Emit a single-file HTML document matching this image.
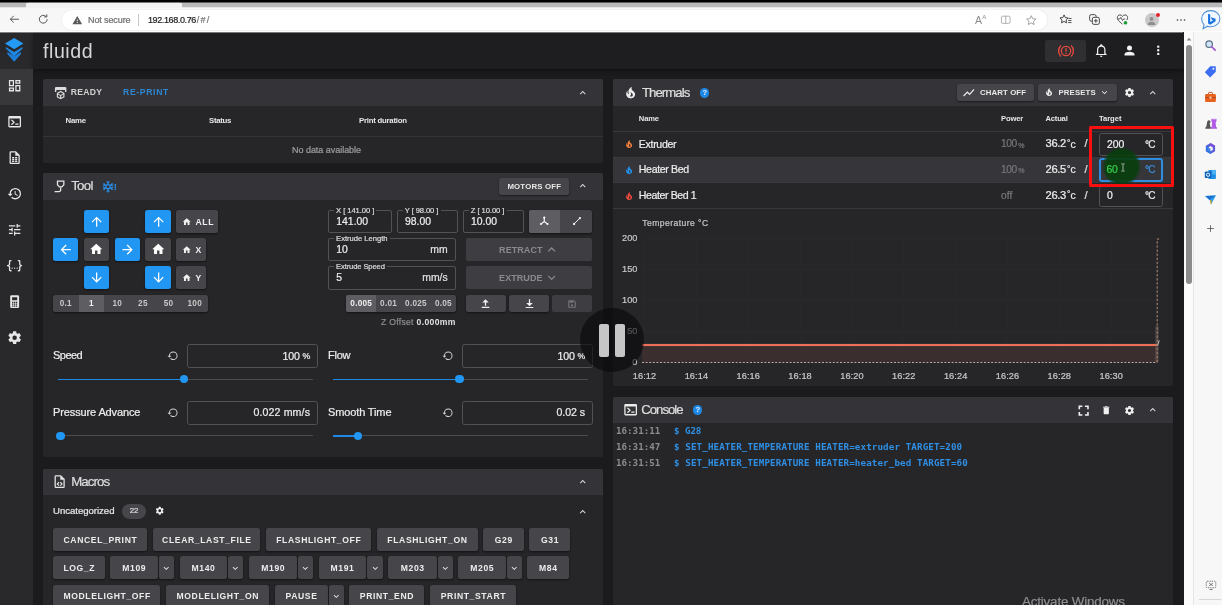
<!DOCTYPE html>
<html lang="en"><head><meta charset="utf-8"><title>fluidd</title>
<style>
html,body{margin:0;padding:0;background:#1b1b1e;}
body{width:1222px;height:605px;position:relative;overflow:hidden;font-family:"Liberation Sans",sans-serif;}
#root{position:absolute;left:0;top:0;width:1222px;height:605px;overflow:hidden;will-change:transform;}
#root div,#root span,#root svg{position:absolute;box-sizing:content-box;}
.t{white-space:nowrap;line-height:1;font-weight:400;-webkit-text-stroke:.22px currentColor;}
.b{font-weight:700;-webkit-text-stroke:0;}
.m{font-family:"DejaVu Sans Mono","Liberation Mono",monospace;}
</style></head><body><div id="root">

<!-- app background -->
<div style="left:0px;top:32px;width:1183.5px;height:573px;background:#1b1b1e;"></div>
<div style="left:0px;top:32px;width:33px;height:573px;background:#29292c;"></div>
<div style="left:33px;top:32px;width:1150.5px;height:36.5px;background:#1e1e21;box-shadow:0 2px 4px rgba(0,0,0,.35);"></div>
<div style="left:0px;top:68.5px;width:33px;height:36px;background:#38383b;"></div>
<!-- left navigation -->
<svg style="left:6.75px;top:78.35px;" width="15.3" height="15.3" viewBox="0 0 24 24" fill="#e6e6e6"><path d="M19,5V7H15V5H19M9,5V11H5V5H9M19,13V19H15V13H19M9,17V19H5V17H9M21,3H13V9H21V3M11,3H3V13H11V3M21,11H13V21H21V11M11,15H3V21H11V15Z"/></svg>
<svg style="left:6.75px;top:114.35px;" width="15.3" height="15.3" viewBox="0 0 24 24" fill="#e6e6e6"><path d="M20,19V7H4V19H20M20,3A2,2 0 0,1 22,5V19A2,2 0 0,1 20,21H4A2,2 0 0,1 2,19V5C2,3.89 2.9,3 4,3H20M13,17V15H18V17H13M9.58,13L5.57,9H8.4L11.7,12.3C12.09,12.69 12.09,13.33 11.7,13.72L8.42,17H5.59L9.58,13Z"/></svg>
<svg style="left:6.75px;top:150.35px;" width="15.3" height="15.3" viewBox="0 0 24 24" fill="#e6e6e6"><path d="M14,2H6A2,2 0 0,0 4,4V20A2,2 0 0,0 6,22H18A2,2 0 0,0 20,20V8L14,2M18,20H6V4H13V9H18V20M8,11H11.300V13.300H8V11M12.700,11H16V13.300H12.700V11M8,14.300H11.300V16.300H8V14.300M12.700,14.300H16V16.300H12.700V14.300M8,17.300H11.300V19H8V17.300M12.700,17.300H16V19H12.700V17.300Z"/></svg>
<svg style="left:6.75px;top:186.35px;" width="15.3" height="15.3" viewBox="0 0 24 24" fill="#e6e6e6"><path d="M13.5,8H12V13L16.28,15.54L17,14.33L13.5,12.25V8M13,3A9,9 0 0,0 4,12H1L4.96,16.03L9,12H6A7,7 0 0,1 13,5A7,7 0 0,1 20,12A7,7 0 0,1 13,19C11.07,19 9.32,18.21 8.06,16.94L6.64,18.36C8.27,20 10.5,21 13,21A9,9 0 0,0 22,12A9,9 0 0,0 13,3"/></svg>
<svg style="left:6.75px;top:222.35px;" width="15.3" height="15.3" viewBox="0 0 24 24" fill="#e6e6e6"><path d="M3,17V19H9V17H3M3,5V7H13V5H3M13,21V19H21V17H13V15H11V21H13M7,9V11H3V13H7V15H9V9H7M21,13V11H11V13H21M15,9H17V7H21V5H17V3H15V9Z"/></svg>
<svg style="left:6.75px;top:258.35px;" width="15.3" height="15.3" viewBox="0 0 24 24" fill="#e6e6e6"><path d="M5,3H7V5H5V10A2,2 0 0,1 3,12A2,2 0 0,1 5,14V19H7V21H5C3.93,20.73 3,20.1 3,19V15A2,2 0 0,0 1,13H0V11H1A2,2 0 0,0 3,9V5A2,2 0 0,1 5,3M19,3A2,2 0 0,1 21,5V9A2,2 0 0,0 23,11H24V13H23A2,2 0 0,0 21,15V19A2,2 0 0,1 19,21H17V19H19V14A2,2 0 0,1 21,12A2,2 0 0,1 19,10V5H17V3H19M12,15A1,1 0 0,1 13,16A1,1 0 0,1 12,17A1,1 0 0,1 11,16A1,1 0 0,1 12,15M8,15A1,1 0 0,1 9,16A1,1 0 0,1 8,17A1,1 0 0,1 7,16A1,1 0 0,1 8,15M16,15A1,1 0 0,1 17,16A1,1 0 0,1 16,17A1,1 0 0,1 15,16A1,1 0 0,1 16,15Z"/></svg>
<svg style="left:6.75px;top:294.35px;" width="15.3" height="15.3" viewBox="0 0 24 24" fill="#e6e6e6"><path d="M7,2H17A2,2 0 0,1 19,4V20A2,2 0 0,1 17,22H7A2,2 0 0,1 5,20V4A2,2 0 0,1 7,2M8,5V10H16V5H8M8,12V14H10V12H8M11,12V14H13V12H11M14,12V14H16V12H14M8,15V17H10V15H8M11,15V17H13V15H11M14,15V17H16V15H14M8,18V20H10V18H8M11,18V20H13V18H11M14,18V20H16V18H14Z"/></svg>
<svg style="left:6.75px;top:330.35px;" width="15.3" height="15.3" viewBox="0 0 24 24" fill="#e6e6e6"><path d="M12,15.5A3.5,3.5 0 0,1 8.5,12A3.5,3.5 0 0,1 12,8.5A3.5,3.5 0 0,1 15.5,12A3.5,3.5 0 0,1 12,15.5M19.43,12.97C19.47,12.65 19.5,12.33 19.5,12C19.5,11.67 19.47,11.34 19.43,11L21.54,9.37C21.73,9.22 21.78,8.95 21.66,8.73L19.66,5.27C19.54,5.05 19.27,4.96 19.05,5.05L16.56,6.05C16.04,5.66 15.5,5.32 14.87,5.07L14.5,2.42C14.46,2.18 14.25,2 14,2H10C9.75,2 9.54,2.18 9.5,2.42L9.13,5.07C8.5,5.32 7.96,5.66 7.44,6.05L4.95,5.05C4.73,4.96 4.46,5.05 4.34,5.27L2.34,8.73C2.21,8.95 2.27,9.22 2.46,9.37L4.57,11C4.53,11.34 4.5,11.67 4.5,12C4.5,12.33 4.53,12.65 4.57,12.97L2.46,14.63C2.27,14.78 2.21,15.05 2.34,15.27L4.34,18.73C4.46,18.95 4.73,19.03 4.95,18.95L7.44,17.94C7.96,18.34 8.5,18.68 9.13,18.93L9.5,21.58C9.54,21.82 9.75,22 10,22H14C14.25,22 14.46,21.82 14.5,21.58L14.87,18.93C15.5,18.67 16.04,18.34 16.56,17.94L19.05,18.95C19.27,19.03 19.54,18.95 19.66,18.73L21.66,15.27C21.78,15.05 21.73,14.78 21.54,14.63L19.43,12.97Z"/></svg>
<svg style="left:4.3px;top:38.3px;" width="20.4" height="24" viewBox="0 0 24 30" fill="#e0e0e0"><path d="M3.500 17.600L12 22.800l8.500-5.200v2.400L12 29.600 3.500 20z" fill="#1c7fdc"/><path d="M1.500 11.200L12 17.400l10.500-6.200v2L12 23.200 1.500 13.200z" fill="#1e88e5"/><path d="M12 0l11.500 7L12 14 .5 7z" fill="#2499f5"/></svg>
<span class="t" style="left:43px;top:42.43px;font-size:19.6px;color:#d6d6d6;letter-spacing:0.55px;-webkit-text-stroke:0;">fluidd</span>
<div style="left:1045px;top:39.5px;width:41px;height:22.5px;background:#2f2f32;border-radius:2px;"></div>
<svg style="left:1056.5px;top:41.6px;" width="18" height="18" viewBox="0 0 24 24" fill="#e0e0e0"><circle cx="12" cy="12" r="6.2" fill="none" stroke="#e5493c" stroke-width="1.8"/><path d="M12 8.3v4.6M12 14.4v1.6" stroke="#e5493c" stroke-width="1.8" fill="none"/><path d="M5.2 4.8A10 10 0 0 0 5.2 19.2M18.8 4.8a10 10 0 0 1 0 14.4" stroke="#e5493c" stroke-width="1.8" fill="none"/></svg>
<svg style="left:1094.25px;top:43.35px;" width="14.5" height="14.5" viewBox="0 0 24 24" fill="#f2f2f2"><path d="M10,21H14A2,2 0 0,1 12,23A2,2 0 0,1 10,21M21,19V20H3V19L5,17V11C5,7.9 7.03,5.17 10,4.29C10,4.19 10,4.1 10,4A2,2 0 0,1 12,2A2,2 0 0,1 14,4C14,4.1 14,4.19 14,4.29C16.97,5.17 19,7.9 19,11V17L21,19M17,11A5,5 0 0,0 12,6A5,5 0 0,0 7,11V18H17V11Z"/></svg>
<svg style="left:1122.2px;top:42.8px;" width="15" height="15" viewBox="0 0 24 24" fill="#f2f2f2"><path d="M12,4A4,4 0 0,1 16,8A4,4 0 0,1 12,12A4,4 0 0,1 8,8A4,4 0 0,1 12,4M12,14C16.42,14 20,15.79 20,18V20H4V18C4,15.79 7.58,14 12,14Z"/></svg>
<svg style="left:1150.75px;top:43.35px;" width="14.5" height="14.5" viewBox="0 0 24 24" fill="#f2f2f2"><path d="M12,16A2,2 0 0,1 14,18A2,2 0 0,1 12,20A2,2 0 0,1 10,18A2,2 0 0,1 12,16M12,10A2,2 0 0,1 14,12A2,2 0 0,1 12,14A2,2 0 0,1 10,12A2,2 0 0,1 12,10M12,4A2,2 0 0,1 14,6A2,2 0 0,1 12,8A2,2 0 0,1 10,6A2,2 0 0,1 12,4Z"/></svg>
<!-- status card -->
<div style="left:43.3px;top:105px;width:559.4px;height:57.5px;background:#262629;border-radius:2px;"></div>
<div style="left:43.3px;top:79px;width:559.4px;height:27px;background:#343438;border-radius:2px 2px 0 0;"></div>
<svg style="left:52.85px;top:84.85px;" width="15.3" height="15.3" viewBox="0 0 24 24" fill="#dcdcdc"><path d="M5 3h14a2 2 0 0 1 2 2v6h-2.2V8H5.2v3H3V5a2 2 0 0 1 2-2z"/><path d="M12 9.2l6 3.3v6.6l-6 3.4-6-3.4v-6.6z M12 11.3l-3.9 2.2 3.9 2.2 3.9-2.2z M7.8 15.1v3l3.3 1.9v-3z M16.2 15.1l-3.3 1.9v3l3.3-1.9z" fill-rule="evenodd"/></svg>
<span class="t b" style="left:70.8px;top:88.1px;font-size:8.6px;color:#d2d2d2;letter-spacing:0.27px;">READY</span>
<span class="t b" style="left:123px;top:88.1px;font-size:8.6px;color:#2b86d3;letter-spacing:0.67px;">RE-PRINT</span>
<svg style="left:576.75px;top:86.75px;" width="11.5" height="11.5" viewBox="0 0 24 24" fill="#d8d8d8"><path d="M7.41,15.41L12,10.83L16.59,15.41L18,14L12,8L6,14L7.41,15.41Z"/></svg>
<span class="t b" style="left:65.6px;top:117.19px;font-size:7.8px;color:#e6e6e6;letter-spacing:-0.28px;">Name</span>
<span class="t b" style="left:209px;top:117.19px;font-size:7.8px;color:#e6e6e6;letter-spacing:-0.31px;">Status</span>
<span class="t b" style="left:359px;top:117.19px;font-size:7.8px;color:#e6e6e6;letter-spacing:-0.24px;">Print duration</span>
<div style="left:43.3px;top:136px;width:559.4px;height:1px;background:#343438;"></div>
<span class="t" style="left:292px;top:145.6px;font-size:9px;color:#9c9c9c;letter-spacing:-0.03px;">No data available</span>
<!-- tool card -->
<div style="left:43.3px;top:198.5px;width:559.4px;height:258.5px;background:#262629;border-radius:2px;"></div>
<div style="left:43.3px;top:173px;width:559.4px;height:26.5px;background:#343438;border-radius:2px 2px 0 0;"></div>
<svg style="left:52.75px;top:178.85px;" width="15.3" height="15.3" viewBox="0 0 24 24" fill="#e4e4e4"><path d="M6 2.500h12v7l-3.600 4h-4.800L6 9.500z M8 4.500v4.200l2.500 2.800h3l2.500-2.800V4.500z" fill-rule="evenodd"/><path d="M11 13.500h2v3.800c0 2-1.400 3.400-3.600 3.400H2.500v-2h6.900c1 0 1.600-.5 1.600-1.500z"/></svg>
<span class="t" style="left:71.2px;top:178.85px;font-size:13.2px;color:#dedede;letter-spacing:-0.67px;">Tool</span>
<svg style="left:101.65px;top:178.75px;" width="15.3" height="15.3" viewBox="0 0 24 24" fill="#e0e0e0"><g stroke="#2a8ee8" fill="none"><path d="M9.500 3v18M1.700 7.500l15.600 9M17.300 7.500l-15.600 9" stroke-width="2"/><path d="M7 4.200l2.500 2.300L12 4.200M7 19.800l2.500-2.300 2.500 2.300M1.500 11l3.300-.8-1-3.200M17.500 11l-3.300-.8 1-3.200M1.500 13l3.300.8-1 3.200M17.500 13l-3.300.8 1 3.200" stroke-width="1.500"/><circle cx="9.500" cy="12" r="3.200" fill="#343438" stroke-width="1.800"/></g></svg>
<span class="t b" style="left:113.7px;top:182.01px;font-size:9.4px;color:#2a8ee8;">!</span>
<div style="left:499px;top:177.6px;width:70.2px;height:17.8px;background:#46464a;border-radius:2.5px;box-shadow:0 1px 2px rgba(0,0,0,.5);"></div>
<span class="t b" style="left:507.4px;top:182.69px;font-size:7.8px;color:#e8e8e8;letter-spacing:0.19px;">MOTORS OFF</span>
<svg style="left:576.75px;top:180.25px;" width="11.5" height="11.5" viewBox="0 0 24 24" fill="#d8d8d8"><path d="M7.41,15.41L12,10.83L16.59,15.41L18,14L12,8L6,14L7.41,15.41Z"/></svg>
<div style="left:83.8px;top:210px;width:25.6px;height:23px;background:#2196f3;border-radius:2.5px;box-shadow:0 1px 2px rgba(0,0,0,.5);"></div>
<svg style="left:88.95px;top:213.85px;" width="15.3" height="15.3" viewBox="0 0 24 24" fill="#fff"><path d="M13,20H11V8L5.5,13.5L4.08,12.08L12,4.16L19.92,12.08L18.5,13.5L13,8V20Z"/></svg>
<div style="left:145.4px;top:210px;width:25.6px;height:23px;background:#2196f3;border-radius:2.5px;box-shadow:0 1px 2px rgba(0,0,0,.5);"></div>
<svg style="left:150.55px;top:213.85px;" width="15.3" height="15.3" viewBox="0 0 24 24" fill="#fff"><path d="M13,20H11V8L5.5,13.5L4.08,12.08L12,4.16L19.92,12.08L18.5,13.5L13,8V20Z"/></svg>
<div style="left:52.8px;top:238.2px;width:25.6px;height:23px;background:#2196f3;border-radius:2.5px;box-shadow:0 1px 2px rgba(0,0,0,.5);"></div>
<svg style="left:57.95px;top:242.05px;" width="15.3" height="15.3" viewBox="0 0 24 24" fill="#fff"><path d="M20,11V13H8L13.5,18.5L12.08,19.92L4.16,12L12.08,4.08L13.5,5.5L8,11H20Z"/></svg>
<div style="left:83.8px;top:238.2px;width:25.6px;height:23px;background:#46464a;border-radius:2.5px;box-shadow:0 1px 2px rgba(0,0,0,.5);"></div>
<svg style="left:89.35px;top:242.45px;" width="14.5" height="14.5" viewBox="0 0 24 24" fill="#fff"><path d="M10,20V14H14V20H19V12H22L12,3L2,12H5V20H10Z"/></svg>
<div style="left:114.6px;top:238.2px;width:25.6px;height:23px;background:#2196f3;border-radius:2.5px;box-shadow:0 1px 2px rgba(0,0,0,.5);"></div>
<svg style="left:119.75px;top:242.05px;" width="15.3" height="15.3" viewBox="0 0 24 24" fill="#fff"><path d="M4,11V13H16L10.5,18.5L11.92,19.92L19.84,12L11.92,4.08L10.5,5.5L16,11H4Z"/></svg>
<div style="left:145.4px;top:238.2px;width:25.6px;height:23px;background:#46464a;border-radius:2.5px;box-shadow:0 1px 2px rgba(0,0,0,.5);"></div>
<svg style="left:150.95px;top:242.45px;" width="14.5" height="14.5" viewBox="0 0 24 24" fill="#fff"><path d="M10,20V14H14V20H19V12H22L12,3L2,12H5V20H10Z"/></svg>
<div style="left:83.8px;top:266.3px;width:25.6px;height:23px;background:#2196f3;border-radius:2.5px;box-shadow:0 1px 2px rgba(0,0,0,.5);"></div>
<svg style="left:88.95px;top:270.15px;" width="15.3" height="15.3" viewBox="0 0 24 24" fill="#fff"><path d="M11,4H13V16L18.5,10.5L19.92,11.92L12,19.84L4.08,11.92L5.5,10.5L11,16V4Z"/></svg>
<div style="left:145.4px;top:266.3px;width:25.6px;height:23px;background:#2196f3;border-radius:2.5px;box-shadow:0 1px 2px rgba(0,0,0,.5);"></div>
<svg style="left:150.55px;top:270.15px;" width="15.3" height="15.3" viewBox="0 0 24 24" fill="#fff"><path d="M11,4H13V16L18.5,10.5L19.92,11.92L12,19.84L4.08,11.92L5.5,10.5L11,16V4Z"/></svg>
<div style="left:176.4px;top:210px;width:41.3px;height:23px;background:#46464a;border-radius:2.5px;box-shadow:0 1px 2px rgba(0,0,0,.5);"></div>
<svg style="left:181.55px;top:216.55px;" width="9.5" height="9.5" viewBox="0 0 24 24" fill="#f0f0f0"><path d="M10,20V14H14V20H19V12H22L12,3L2,12H5V20H10Z"/></svg>
<span class="t b" style="left:195.4px;top:217.5px;font-size:8.6px;color:#f0f0f0;letter-spacing:0.7px;">ALL</span>
<div style="left:176.4px;top:238.2px;width:30px;height:23px;background:#46464a;border-radius:2.5px;box-shadow:0 1px 2px rgba(0,0,0,.5);"></div>
<svg style="left:181.55px;top:244.75px;" width="9.5" height="9.5" viewBox="0 0 24 24" fill="#f0f0f0"><path d="M10,20V14H14V20H19V12H22L12,3L2,12H5V20H10Z"/></svg>
<span class="t b" style="left:195.4px;top:245.7px;font-size:8.6px;color:#f0f0f0;letter-spacing:0.7px;">X</span>
<div style="left:176.4px;top:266.3px;width:30px;height:23px;background:#46464a;border-radius:2.5px;box-shadow:0 1px 2px rgba(0,0,0,.5);"></div>
<svg style="left:181.55px;top:272.85px;" width="9.5" height="9.5" viewBox="0 0 24 24" fill="#f0f0f0"><path d="M10,20V14H14V20H19V12H22L12,3L2,12H5V20H10Z"/></svg>
<span class="t b" style="left:195.4px;top:273.8px;font-size:8.6px;color:#f0f0f0;letter-spacing:0.7px;">Y</span>
<div style="left:52.8px;top:294.6px;width:155.2px;height:17.6px;background:#46464a;border-radius:2.5px;box-shadow:0 1px 2px rgba(0,0,0,.5);"></div>
<div style="left:78.5px;top:294.6px;width:25.7px;height:17.6px;background:#5e5e62;"></div>
<span class="t b" style="left:59.65px;top:299.59px;font-size:8.2px;color:#c8c8c8;letter-spacing:0.3px;">0.1</span>
<span class="t b" style="left:89.07px;top:299.59px;font-size:8.2px;color:#f0f0f0;letter-spacing:0.3px;">1</span>
<span class="t b" style="left:112.39px;top:299.59px;font-size:8.2px;color:#c8c8c8;letter-spacing:0.3px;">10</span>
<span class="t b" style="left:138.09px;top:299.59px;font-size:8.2px;color:#c8c8c8;letter-spacing:0.3px;">25</span>
<span class="t b" style="left:163.74px;top:299.59px;font-size:8.2px;color:#c8c8c8;letter-spacing:0.3px;">50</span>
<span class="t b" style="left:187.51px;top:299.59px;font-size:8.2px;color:#c8c8c8;letter-spacing:0.3px;">100</span>
<div style="left:328.3px;top:210px;width:61.6px;height:21px;border:1px solid #525256;border-radius:2px;"></div>
<div style="left:334.3px;top:209px;width:42.2px;height:3px;background:#262629;"></div>
<span class="t" style="left:336.1px;top:206.59px;font-size:7.6px;color:#dadada;letter-spacing:-0.06px;">X [ 141.00 ]</span>
<span class="t" style="left:336.3px;top:216.52px;font-size:10.4px;color:#ececec;">141.00</span>
<div style="left:397px;top:210px;width:58.6px;height:21px;border:1px solid #525256;border-radius:2px;"></div>
<div style="left:403px;top:209px;width:37.6px;height:3px;background:#262629;"></div>
<span class="t" style="left:404.8px;top:206.59px;font-size:7.6px;color:#dadada;letter-spacing:-0.09px;">Y [ 98.00 ]</span>
<span class="t" style="left:405px;top:216.52px;font-size:10.4px;color:#ececec;">98.00</span>
<div style="left:463px;top:210px;width:58.6px;height:21px;border:1px solid #525256;border-radius:2px;"></div>
<div style="left:469px;top:209px;width:37.6px;height:3px;background:#262629;"></div>
<span class="t" style="left:470.8px;top:206.59px;font-size:7.6px;color:#dadada;letter-spacing:-0.06px;">Z [ 10.00 ]</span>
<span class="t" style="left:471px;top:216.52px;font-size:10.4px;color:#ececec;">10.00</span>
<div style="left:328.3px;top:238px;width:125.4px;height:21px;border:1px solid #525256;border-radius:2px;"></div>
<div style="left:334.3px;top:237px;width:55.4px;height:3px;background:#262629;"></div>
<span class="t" style="left:336.1px;top:234.59px;font-size:7.6px;color:#dadada;letter-spacing:-0.01px;">Extrude Length</span>
<span class="t" style="left:336.3px;top:244.52px;font-size:10.4px;color:#ececec;">10</span>
<span class="t" style="left:430.37px;top:244.52px;font-size:10.4px;color:#e0e0e0;">mm</span>
<div style="left:328.3px;top:266px;width:125.4px;height:21.6px;border:1px solid #525256;border-radius:2px;"></div>
<div style="left:334.3px;top:265px;width:52.8px;height:3px;background:#262629;"></div>
<span class="t" style="left:336.1px;top:262.59px;font-size:7.6px;color:#dadada;letter-spacing:-0.12px;">Extrude Speed</span>
<span class="t" style="left:336.3px;top:272.82px;font-size:10.4px;color:#ececec;">5</span>
<span class="t" style="left:422.28px;top:272.82px;font-size:10.4px;color:#e0e0e0;">mm/s</span>
<div style="left:528.8px;top:210px;width:63.6px;height:22.6px;background:#46464a;border-radius:2.5px;box-shadow:0 1px 2px rgba(0,0,0,.5);"></div>
<div style="left:528.8px;top:210px;width:31.6px;height:22.6px;background:#5e5e62;border-radius:2px 0 0 2px;"></div>
<svg style="left:539.35px;top:216.05px;" width="10.5" height="10.5" viewBox="0 0 24 24" fill="#e0e0e0"><path d="M12 3.500v9M12 12.500l-7.200 5.500M12 12.500l7.200 5.500" stroke="#fff" stroke-width="2.600" fill="none"/><circle cx="12" cy="3.800" r="2.400" fill="#fff"/><circle cx="4.500" cy="18.300" r="2.400" fill="#fff"/><circle cx="19.500" cy="18.300" r="2.400" fill="#fff"/></svg>
<svg style="left:571.5px;top:216.3px;" width="10" height="10" viewBox="0 0 24 24" fill="#e0e0e0"><path d="M5 19L19 5" stroke="#eee" stroke-width="2.400" fill="none"/><circle cx="5" cy="19" r="2.800" fill="#eee"/><circle cx="19" cy="5" r="2.800" fill="#eee"/></svg>
<div style="left:465.5px;top:237.8px;width:126.9px;height:22.9px;background:#3e3e42;border-radius:2px;"></div>
<span class="t b" style="left:499.05px;top:245.5px;font-size:9px;color:#8a8a8d;letter-spacing:0.08px;">RETRACT</span>
<svg style="left:543.55px;top:242.05px;" width="15.3" height="15.3" viewBox="0 0 24 24" fill="#8a8a8d"><path d="M7.41,15.41L12,10.83L16.59,15.41L18,14L12,8L6,14L7.41,15.41Z"/></svg>
<div style="left:465.5px;top:266px;width:126.9px;height:22.9px;background:#3e3e42;border-radius:2px;"></div>
<span class="t b" style="left:499.05px;top:273.7px;font-size:9px;color:#8a8a8d;letter-spacing:0.08px;">EXTRUDE</span>
<svg style="left:543.55px;top:270.25px;" width="15.3" height="15.3" viewBox="0 0 24 24" fill="#8a8a8d"><path d="M7.41,8.58L12,13.17L16.59,8.58L18,10L12,16L6,10L7.41,8.58Z"/></svg>
<div style="left:346px;top:294.7px;width:109.6px;height:17.5px;background:#46464a;border-radius:2.5px;box-shadow:0 1px 2px rgba(0,0,0,.5);"></div>
<div style="left:346px;top:294.7px;width:30.2px;height:17.5px;background:#5e5e62;border-radius:2px 0 0 2px;"></div>
<span class="t b" style="left:350.34px;top:299.59px;font-size:8.2px;color:#f0f0f0;letter-spacing:0.25px;">0.005</span>
<span class="t b" style="left:380.1px;top:299.59px;font-size:8.2px;color:#c8c8c8;letter-spacing:0.25px;">0.01</span>
<span class="t b" style="left:405.09px;top:299.59px;font-size:8.2px;color:#c8c8c8;letter-spacing:0.25px;">0.025</span>
<span class="t b" style="left:434.95px;top:299.59px;font-size:8.2px;color:#c8c8c8;letter-spacing:0.25px;">0.05</span>
<div style="left:465.5px;top:294.7px;width:40.3px;height:17.5px;background:#46464a;border-radius:2.5px;box-shadow:0 1px 2px rgba(0,0,0,.5);"></div>
<div style="left:508.6px;top:294.7px;width:40.9px;height:17.5px;background:#46464a;border-radius:2.5px;box-shadow:0 1px 2px rgba(0,0,0,.5);"></div>
<div style="left:552.3px;top:294.7px;width:40.1px;height:17.5px;background:#3e3e42;border-radius:2px;"></div>
<svg style="left:479.1px;top:296.9px;" width="13" height="13" viewBox="0 0 24 24" fill="#f0f0f0"><path d="M12 4l-6 6h4.800v6h2.400v-6H18z M5 18h14v2.200H5z" /></svg>
<svg style="left:522.5px;top:296.9px;" width="13" height="13" viewBox="0 0 24 24" fill="#f0f0f0"><path d="M12 17l-6-6h4.800V4h2.400v7H18z M5 18.300h14v2.200H5z" /></svg>
<svg style="left:567.3px;top:298.6px;" width="10" height="10" viewBox="0 0 24 24" fill="#77777b"><path d="M5 3h12l4 4v12a2 2 0 0 1-2 2H5a2 2 0 0 1-2-2V5a2 2 0 0 1 2-2z M5.500 5.500v13h13V8l-2.500-2.500H15V9H7V5.500z M12 12.500a2.500 2.500 0 1 1 0 5 2.500 2.500 0 0 1 0-5z" fill-rule="evenodd"/></svg>
<span class="t b" style="left:416.5px;top:317.9px;font-size:8.6px;color:#e0e0e0;letter-spacing:0.36px;">0.000mm</span>
<span class="t" style="left:381px;top:317.9px;font-size:8.6px;color:#8d8d90;letter-spacing:0.3px;">Z Offset</span>
<span class="t" style="left:53px;top:350.33px;font-size:11px;color:#ececec;letter-spacing:-0.53px;">Speed</span>
<svg style="left:166.65px;top:350.25px;" width="11.5" height="11.5" viewBox="0 0 24 24" fill="#d4d4d4"><path d="M13,3A9,9 0 0,0 4,12H1L4.890,15.890L4.960,16.030L9,12H6A7,7 0 0,1 13,5A7,7 0 0,1 20,12A7,7 0 0,1 13,19C11.070,19 9.320,18.210 8.060,16.940L6.640,18.360C8.270,20 10.500,21 13,21A9,9 0 0,0 22,12A9,9 0 0,0 13,3"/></svg>
<div style="left:187px;top:344px;width:129px;height:22px;border:1px solid #525256;border-radius:2.5px;"></div>
<span class="t" style="left:302.38px;top:351.6px;font-size:8.8px;color:#ececec;">%</span>
<span class="t" style="left:282.6px;top:350.52px;font-size:10.6px;color:#ececec;letter-spacing:-0.24px;">100</span>
<div style="left:57.8px;top:378.7px;width:255.2px;height:1.2px;background:#4c4c50;"></div>
<div style="left:57.8px;top:378.5px;width:126.5px;height:1.5px;background:#1e88e5;"></div>
<div style="left:180.1px;top:375px;width:8.4px;height:8.4px;background:#2196f3;border-radius:5px;"></div>
<span class="t" style="left:328px;top:350.33px;font-size:11px;color:#ececec;letter-spacing:-0.24px;">Flow</span>
<svg style="left:441.65px;top:350.25px;" width="11.5" height="11.5" viewBox="0 0 24 24" fill="#d4d4d4"><path d="M13,3A9,9 0 0,0 4,12H1L4.890,15.890L4.960,16.030L9,12H6A7,7 0 0,1 13,5A7,7 0 0,1 20,12A7,7 0 0,1 13,19C11.070,19 9.320,18.210 8.060,16.940L6.640,18.360C8.270,20 10.500,21 13,21A9,9 0 0,0 22,12A9,9 0 0,0 13,3"/></svg>
<div style="left:462px;top:344px;width:129px;height:22px;border:1px solid #525256;border-radius:2.5px;"></div>
<span class="t" style="left:577.38px;top:351.6px;font-size:8.8px;color:#ececec;">%</span>
<span class="t" style="left:557.6px;top:350.52px;font-size:10.6px;color:#ececec;letter-spacing:-0.24px;">100</span>
<div style="left:333px;top:378.7px;width:255px;height:1.2px;background:#4c4c50;"></div>
<div style="left:333px;top:378.5px;width:126.5px;height:1.5px;background:#1e88e5;"></div>
<div style="left:455.3px;top:375px;width:8.4px;height:8.4px;background:#2196f3;border-radius:5px;"></div>
<span class="t" style="left:53px;top:406.93px;font-size:11px;color:#ececec;letter-spacing:-0.12px;">Pressure Advance</span>
<svg style="left:166.65px;top:406.85px;" width="11.5" height="11.5" viewBox="0 0 24 24" fill="#d4d4d4"><path d="M13,3A9,9 0 0,0 4,12H1L4.890,15.890L4.960,16.030L9,12H6A7,7 0 0,1 13,5A7,7 0 0,1 20,12A7,7 0 0,1 13,19C11.070,19 9.320,18.210 8.060,16.940L6.640,18.360C8.270,20 10.500,21 13,21A9,9 0 0,0 22,12A9,9 0 0,0 13,3"/></svg>
<div style="left:187px;top:400.6px;width:129px;height:22px;border:1px solid #525256;border-radius:2.5px;"></div>
<span class="t" style="left:253.5px;top:407.12px;font-size:10.6px;color:#ececec;letter-spacing:0.12px;">0.022 mm/s</span>
<div style="left:57.8px;top:435.2px;width:255.2px;height:1.2px;background:#4c4c50;"></div>
<div style="left:57.8px;top:435px;width:2.8px;height:1.5px;background:#1e88e5;"></div>
<div style="left:56.4px;top:431.5px;width:8.4px;height:8.4px;background:#2196f3;border-radius:5px;"></div>
<span class="t" style="left:328px;top:406.93px;font-size:11px;color:#ececec;letter-spacing:-0.13px;">Smooth Time</span>
<svg style="left:441.65px;top:406.85px;" width="11.5" height="11.5" viewBox="0 0 24 24" fill="#d4d4d4"><path d="M13,3A9,9 0 0,0 4,12H1L4.890,15.890L4.960,16.030L9,12H6A7,7 0 0,1 13,5A7,7 0 0,1 20,12A7,7 0 0,1 13,19C11.070,19 9.320,18.210 8.060,16.940L6.640,18.360C8.270,20 10.500,21 13,21A9,9 0 0,0 22,12A9,9 0 0,0 13,3"/></svg>
<div style="left:462px;top:400.6px;width:129px;height:22px;border:1px solid #525256;border-radius:2.5px;"></div>
<span class="t" style="left:556.5px;top:407.12px;font-size:10.6px;color:#ececec;letter-spacing:-0.08px;">0.02 s</span>
<div style="left:333px;top:435.2px;width:255px;height:1.2px;background:#4c4c50;"></div>
<div style="left:333px;top:435px;width:25.2px;height:1.5px;background:#1e88e5;"></div>
<div style="left:354px;top:431.5px;width:8.4px;height:8.4px;background:#2196f3;border-radius:5px;"></div>
<!-- macros card -->
<div style="left:43.3px;top:494px;width:559.4px;height:116px;background:#262629;border-radius:2px;"></div>
<div style="left:43.3px;top:468.5px;width:559.4px;height:26.5px;background:#343438;border-radius:2px 2px 0 0;"></div>
<svg style="left:52.35px;top:473.85px;" width="15.3" height="15.3" viewBox="0 0 24 24" fill="#e4e4e4"><path d="M14,2H6A2,2 0 0,0 4,4V20A2,2 0 0,0 6,22H18A2,2 0 0,0 20,20V8L14,2M18,20H6V4H13V9H18V20M9.54,15.65L11.63,17.74L10.35,19L7,15.65L10.35,12.3L11.63,13.56L9.54,15.65M17,15.65L13.65,19L12.38,17.74L14.47,15.65L12.38,13.56L13.65,12.3L17,15.65Z"/></svg>
<span class="t" style="left:71.2px;top:474.85px;font-size:13.2px;color:#dedede;letter-spacing:-0.86px;">Macros</span>
<svg style="left:576.75px;top:475.75px;" width="11.5" height="11.5" viewBox="0 0 24 24" fill="#d8d8d8"><path d="M7.41,15.41L12,10.83L16.59,15.41L18,14L12,8L6,14L7.41,15.41Z"/></svg>
<span class="t" style="left:53px;top:506.11px;font-size:9.6px;color:#e6e6e6;letter-spacing:-0.03px;">Uncategorized</span>
<div style="left:122.2px;top:503.9px;width:23.8px;height:14.8px;background:#47474b;border-radius:7.4px;"></div>
<span class="t" style="left:129.76px;top:507.49px;font-size:7.8px;color:#dcdcdc;">22</span>
<svg style="left:155.05px;top:506.45px;" width="9.5" height="9.5" viewBox="0 0 24 24" fill="#f0f0f0"><path d="M12,15.5A3.5,3.5 0 0,1 8.5,12A3.5,3.5 0 0,1 12,8.5A3.5,3.5 0 0,1 15.5,12A3.5,3.5 0 0,1 12,15.5M19.43,12.97C19.47,12.65 19.5,12.33 19.5,12C19.5,11.67 19.47,11.34 19.43,11L21.54,9.37C21.73,9.22 21.78,8.95 21.66,8.73L19.66,5.27C19.54,5.05 19.27,4.96 19.05,5.05L16.56,6.05C16.04,5.66 15.5,5.32 14.87,5.07L14.5,2.42C14.46,2.18 14.25,2 14,2H10C9.75,2 9.54,2.18 9.5,2.42L9.13,5.07C8.5,5.32 7.96,5.66 7.44,6.05L4.95,5.05C4.73,4.96 4.46,5.05 4.34,5.27L2.34,8.73C2.21,8.95 2.27,9.22 2.46,9.37L4.57,11C4.53,11.34 4.5,11.67 4.5,12C4.5,12.33 4.53,12.65 4.57,12.97L2.46,14.63C2.27,14.78 2.21,15.05 2.34,15.27L4.34,18.73C4.46,18.95 4.73,19.03 4.95,18.95L7.44,17.94C7.96,18.34 8.5,18.68 9.13,18.93L9.5,21.58C9.54,21.82 9.75,22 10,22H14C14.25,22 14.46,21.82 14.5,21.58L14.87,18.93C15.5,18.67 16.04,18.34 16.56,17.94L19.05,18.95C19.27,19.03 19.54,18.95 19.66,18.73L21.66,15.27C21.78,15.05 21.73,14.78 21.54,14.63L19.43,12.97Z"/></svg>
<svg style="left:576.75px;top:505.75px;" width="11.5" height="11.5" viewBox="0 0 24 24" fill="#d8d8d8"><path d="M7.41,15.41L12,10.83L16.59,15.41L18,14L12,8L6,14L7.41,15.41Z"/></svg>
<div style="left:53.2px;top:528.3px;width:93.9px;height:22.7px;background:#46464a;border-radius:2.5px;box-shadow:0 1px 2px rgba(0,0,0,.5);"></div>
<span class="t b" style="left:63.53px;top:535.7px;font-size:8.6px;color:#ececec;letter-spacing:0.62px;">CANCEL_PRINT</span>
<div style="left:152.7px;top:528.3px;width:107.8px;height:22.7px;background:#46464a;border-radius:2.5px;box-shadow:0 1px 2px rgba(0,0,0,.5);"></div>
<span class="t b" style="left:162.12px;top:535.7px;font-size:8.6px;color:#ececec;letter-spacing:0.62px;">CLEAR_LAST_FILE</span>
<div style="left:266px;top:528.3px;width:105px;height:22.7px;background:#46464a;border-radius:2.5px;box-shadow:0 1px 2px rgba(0,0,0,.5);"></div>
<span class="t b" style="left:276.25px;top:535.7px;font-size:8.6px;color:#ececec;letter-spacing:0.62px;">FLASHLIGHT_OFF</span>
<div style="left:376.6px;top:528.3px;width:101.1px;height:22.7px;background:#46464a;border-radius:2.5px;box-shadow:0 1px 2px rgba(0,0,0,.5);"></div>
<span class="t b" style="left:387.36px;top:535.7px;font-size:8.6px;color:#ececec;letter-spacing:0.62px;">FLASHLIGHT_ON</span>
<div style="left:483px;top:528.3px;width:41px;height:22.7px;background:#46464a;border-radius:2.5px;box-shadow:0 1px 2px rgba(0,0,0,.5);"></div>
<span class="t b" style="left:494.75px;top:535.7px;font-size:8.6px;color:#ececec;letter-spacing:0.62px;">G29</span>
<div style="left:529.3px;top:528.3px;width:40.9px;height:22.7px;background:#46464a;border-radius:2.5px;box-shadow:0 1px 2px rgba(0,0,0,.5);"></div>
<span class="t b" style="left:541px;top:535.7px;font-size:8.6px;color:#ececec;letter-spacing:0.62px;">G31</span>
<div style="left:53.2px;top:556.4px;width:51.5px;height:22.7px;background:#46464a;border-radius:2.5px;box-shadow:0 1px 2px rgba(0,0,0,.5);"></div>
<span class="t b" style="left:63.38px;top:563.8px;font-size:8.6px;color:#ececec;letter-spacing:0.62px;">LOG_Z</span>
<div style="left:110px;top:556.4px;width:48px;height:22.7px;background:#46464a;border-radius:2.5px;box-shadow:0 1px 2px rgba(0,0,0,.5);"></div>
<span class="t b" style="left:122.31px;top:563.8px;font-size:8.6px;color:#ececec;letter-spacing:0.62px;">M109</span>
<div style="left:159px;top:556.4px;width:14.7px;height:22.7px;background:#46464a;border-radius:2.5px;box-shadow:0 1px 2px rgba(0,0,0,.5);"></div>
<svg style="left:161.1px;top:562.75px;" width="10.5" height="10.5" viewBox="0 0 24 24" fill="#e6e6e6"><path d="M7.41,8.58L12,13.17L16.59,8.58L18,10L12,16L6,10L7.41,8.58Z"/></svg>
<div style="left:179.5px;top:556.4px;width:47.5px;height:22.7px;background:#46464a;border-radius:2.5px;box-shadow:0 1px 2px rgba(0,0,0,.5);"></div>
<span class="t b" style="left:191.56px;top:563.8px;font-size:8.6px;color:#ececec;letter-spacing:0.62px;">M140</span>
<div style="left:228px;top:556.4px;width:15.3px;height:22.7px;background:#46464a;border-radius:2.5px;box-shadow:0 1px 2px rgba(0,0,0,.5);"></div>
<svg style="left:230.4px;top:562.75px;" width="10.5" height="10.5" viewBox="0 0 24 24" fill="#e6e6e6"><path d="M7.41,8.58L12,13.17L16.59,8.58L18,10L12,16L6,10L7.41,8.58Z"/></svg>
<div style="left:249px;top:556.4px;width:48px;height:22.7px;background:#46464a;border-radius:2.5px;box-shadow:0 1px 2px rgba(0,0,0,.5);"></div>
<span class="t b" style="left:261.31px;top:563.8px;font-size:8.6px;color:#ececec;letter-spacing:0.62px;">M190</span>
<div style="left:298px;top:556.4px;width:14.8px;height:22.7px;background:#46464a;border-radius:2.5px;box-shadow:0 1px 2px rgba(0,0,0,.5);"></div>
<svg style="left:300.15px;top:562.75px;" width="10.5" height="10.5" viewBox="0 0 24 24" fill="#e6e6e6"><path d="M7.41,8.58L12,13.17L16.59,8.58L18,10L12,16L6,10L7.41,8.58Z"/></svg>
<div style="left:318.5px;top:556.4px;width:47.5px;height:22.7px;background:#46464a;border-radius:2.5px;box-shadow:0 1px 2px rgba(0,0,0,.5);"></div>
<span class="t b" style="left:330.56px;top:563.8px;font-size:8.6px;color:#ececec;letter-spacing:0.62px;">M191</span>
<div style="left:367px;top:556.4px;width:15.8px;height:22.7px;background:#46464a;border-radius:2.5px;box-shadow:0 1px 2px rgba(0,0,0,.5);"></div>
<svg style="left:369.65px;top:562.75px;" width="10.5" height="10.5" viewBox="0 0 24 24" fill="#e6e6e6"><path d="M7.41,8.58L12,13.17L16.59,8.58L18,10L12,16L6,10L7.41,8.58Z"/></svg>
<div style="left:388px;top:556.4px;width:49px;height:22.7px;background:#46464a;border-radius:2.5px;box-shadow:0 1px 2px rgba(0,0,0,.5);"></div>
<span class="t b" style="left:400.81px;top:563.8px;font-size:8.6px;color:#ececec;letter-spacing:0.62px;">M203</span>
<div style="left:438px;top:556.4px;width:14.5px;height:22.7px;background:#46464a;border-radius:2.5px;box-shadow:0 1px 2px rgba(0,0,0,.5);"></div>
<svg style="left:440px;top:562.75px;" width="10.5" height="10.5" viewBox="0 0 24 24" fill="#e6e6e6"><path d="M7.41,8.58L12,13.17L16.59,8.58L18,10L12,16L6,10L7.41,8.58Z"/></svg>
<div style="left:458px;top:556.4px;width:48px;height:22.7px;background:#46464a;border-radius:2.5px;box-shadow:0 1px 2px rgba(0,0,0,.5);"></div>
<span class="t b" style="left:470.31px;top:563.8px;font-size:8.6px;color:#ececec;letter-spacing:0.62px;">M205</span>
<div style="left:507px;top:556.4px;width:15px;height:22.7px;background:#46464a;border-radius:2.5px;box-shadow:0 1px 2px rgba(0,0,0,.5);"></div>
<svg style="left:509.25px;top:562.75px;" width="10.5" height="10.5" viewBox="0 0 24 24" fill="#e6e6e6"><path d="M7.41,8.58L12,13.17L16.59,8.58L18,10L12,16L6,10L7.41,8.58Z"/></svg>
<div style="left:527.3px;top:556.4px;width:41.5px;height:22.7px;background:#46464a;border-radius:2.5px;box-shadow:0 1px 2px rgba(0,0,0,.5);"></div>
<span class="t b" style="left:539.06px;top:563.8px;font-size:8.6px;color:#ececec;letter-spacing:0.62px;">M84</span>
<div style="left:53.2px;top:584.6px;width:107.3px;height:22.7px;background:#46464a;border-radius:2.5px;box-shadow:0 1px 2px rgba(0,0,0,.5);"></div>
<span class="t b" style="left:63.41px;top:592px;font-size:8.6px;color:#ececec;letter-spacing:0.62px;">MODLELIGHT_OFF</span>
<div style="left:166px;top:584.6px;width:103px;height:22.7px;background:#46464a;border-radius:2.5px;box-shadow:0 1px 2px rgba(0,0,0,.5);"></div>
<span class="t b" style="left:176.51px;top:592px;font-size:8.6px;color:#ececec;letter-spacing:0.62px;">MODLELIGHT_ON</span>
<div style="left:274.5px;top:584.6px;width:53.5px;height:22.7px;background:#46464a;border-radius:2.5px;box-shadow:0 1px 2px rgba(0,0,0,.5);"></div>
<span class="t b" style="left:285.51px;top:592px;font-size:8.6px;color:#ececec;letter-spacing:0.62px;">PAUSE</span>
<div style="left:329px;top:584.6px;width:14.6px;height:22.7px;background:#46464a;border-radius:2.5px;box-shadow:0 1px 2px rgba(0,0,0,.5);"></div>
<svg style="left:331.05px;top:590.95px;" width="10.5" height="10.5" viewBox="0 0 24 24" fill="#e6e6e6"><path d="M7.41,8.58L12,13.17L16.59,8.58L18,10L12,16L6,10L7.41,8.58Z"/></svg>
<div style="left:348.8px;top:584.6px;width:75.7px;height:22.7px;background:#46464a;border-radius:2.5px;box-shadow:0 1px 2px rgba(0,0,0,.5);"></div>
<span class="t b" style="left:359.8px;top:592px;font-size:8.6px;color:#ececec;letter-spacing:0.62px;">PRINT_END</span>
<div style="left:429.8px;top:584.6px;width:86.7px;height:22.7px;background:#46464a;border-radius:2.5px;box-shadow:0 1px 2px rgba(0,0,0,.5);"></div>
<span class="t b" style="left:440.74px;top:592px;font-size:8.6px;color:#ececec;letter-spacing:0.62px;">PRINT_START</span>
<!-- thermals card -->
<div style="left:613.4px;top:105px;width:560px;height:280.5px;background:#262629;border-radius:2px;"></div>
<div style="left:613.4px;top:79px;width:560px;height:27px;background:#343438;border-radius:2px 2px 0 0;"></div>
<svg style="left:623.35px;top:85.15px;" width="15.3" height="15.3" viewBox="0 0 24 24" fill="#ececec"><path d="M17.66,11.2C17.43,10.9 17.15,10.64 16.89,10.38C16.22,9.78 15.46,9.35 14.82,8.72C13.33,7.26 13,4.85 13.95,3C13,3.23 12.17,3.75 11.46,4.32C8.87,6.4 7.85,10.07 9.07,13.22C9.11,13.32 9.15,13.42 9.15,13.55C9.15,13.77 9,13.97 8.8,14.05C8.57,14.15 8.33,14.09 8.14,13.93C8.08,13.88 8.04,13.83 8,13.76C6.87,12.33 6.69,10.28 7.45,8.64C5.78,10 4.87,12.3 5,14.47C5.06,14.97 5.12,15.47 5.29,15.97C5.43,16.57 5.7,17.17 6,17.7C7.08,19.43 8.95,20.67 10.96,20.92C13.1,21.19 15.39,20.8 17.03,19.32C18.86,17.66 19.5,15 18.56,12.72L18.43,12.46C18.22,12 17.66,11.2 17.66,11.2M14.5,17.5C14.22,17.74 13.76,18 13.4,18.1C12.28,18.5 11.16,17.94 10.5,17.28C11.69,17 12.4,16.12 12.61,15.23C12.78,14.43 12.46,13.77 12.33,13C12.21,12.26 12.23,11.63 12.5,10.94C12.69,11.32 12.89,11.7 13.13,12C13.9,13 15.11,13.44 15.37,14.8C15.41,14.94 15.43,15.08 15.43,15.23C15.46,16.05 15.1,16.95 14.5,17.5H14.5Z"/></svg>
<span class="t" style="left:642px;top:85.85px;font-size:13.2px;color:#dedede;letter-spacing:-0.96px;">Thermals</span>
<div style="left:700px;top:88.3px;width:9.4px;height:9.4px;background:#1e88e5;border-radius:4.7px;"></div>
<span class="t b" style="left:702.43px;top:89.39px;font-size:7.6px;color:#e8f2ff;">?</span>
<div style="left:957.3px;top:83.7px;width:76.9px;height:17px;background:#46464a;border-radius:2.5px;box-shadow:0 1px 2px rgba(0,0,0,.5);"></div>
<svg style="left:962.05px;top:85.55px;" width="13.5" height="13.5" viewBox="0 0 24 24" fill="#ececec"><path d="M3.5,18.5L9.5,12.5L13.5,16.5L22,6.92L20.59,5.5L13.5,13.5L9.5,9.5L2,17L3.5,18.5Z"/></svg>
<span class="t b" style="left:980px;top:88.59px;font-size:7.8px;color:#e8e8e8;letter-spacing:0.12px;">CHART OFF</span>
<div style="left:1037.6px;top:83.7px;width:79.3px;height:17px;background:#46464a;border-radius:2.5px;box-shadow:0 1px 2px rgba(0,0,0,.5);"></div>
<svg style="left:1044.4px;top:87.2px;" width="10.2" height="10.2" viewBox="0 0 24 24" fill="#ececec"><path d="M17.66,11.2C17.43,10.9 17.15,10.64 16.89,10.38C16.22,9.78 15.46,9.35 14.82,8.72C13.33,7.26 13,4.85 13.95,3C13,3.23 12.17,3.75 11.46,4.32C8.87,6.4 7.85,10.07 9.07,13.22C9.11,13.32 9.15,13.42 9.15,13.55C9.15,13.77 9,13.97 8.8,14.05C8.57,14.15 8.33,14.09 8.14,13.93C8.08,13.88 8.04,13.83 8,13.76C6.87,12.33 6.69,10.28 7.45,8.64C5.78,10 4.87,12.3 5,14.47C5.06,14.97 5.12,15.47 5.29,15.97C5.43,16.57 5.7,17.17 6,17.7C7.08,19.43 8.95,20.67 10.96,20.92C13.1,21.19 15.39,20.8 17.03,19.32C18.86,17.66 19.5,15 18.56,12.72L18.43,12.46C18.22,12 17.66,11.2 17.66,11.2M14.5,17.5C14.22,17.74 13.76,18 13.4,18.1C12.28,18.5 11.16,17.94 10.5,17.28C11.69,17 12.4,16.12 12.61,15.23C12.78,14.43 12.46,13.77 12.33,13C12.21,12.26 12.23,11.63 12.5,10.94C12.69,11.32 12.89,11.7 13.13,12C13.9,13 15.11,13.44 15.37,14.8C15.41,14.94 15.43,15.08 15.43,15.23C15.46,16.05 15.1,16.95 14.5,17.5H14.5Z"/></svg>
<span class="t b" style="left:1058.5px;top:88.59px;font-size:7.8px;color:#e8e8e8;letter-spacing:0.13px;">PRESETS</span>
<svg style="left:1098.8px;top:87.1px;" width="11" height="11" viewBox="0 0 24 24" fill="#e6e6e6"><path d="M7.41,8.58L12,13.17L16.59,8.58L18,10L12,16L6,10L7.41,8.58Z"/></svg>
<svg style="left:1124.3px;top:86.9px;" width="11" height="11" viewBox="0 0 24 24" fill="#f0f0f0"><path d="M12,15.5A3.5,3.5 0 0,1 8.5,12A3.5,3.5 0 0,1 12,8.5A3.5,3.5 0 0,1 15.5,12A3.5,3.5 0 0,1 12,15.5M19.43,12.97C19.47,12.65 19.5,12.33 19.5,12C19.5,11.67 19.47,11.34 19.43,11L21.54,9.37C21.73,9.22 21.78,8.95 21.66,8.73L19.66,5.27C19.54,5.05 19.27,4.96 19.05,5.05L16.56,6.05C16.04,5.66 15.5,5.32 14.87,5.07L14.5,2.42C14.46,2.18 14.25,2 14,2H10C9.75,2 9.54,2.18 9.5,2.42L9.13,5.07C8.5,5.32 7.96,5.66 7.44,6.05L4.95,5.05C4.73,4.96 4.46,5.05 4.34,5.27L2.34,8.73C2.21,8.95 2.27,9.22 2.46,9.37L4.57,11C4.53,11.34 4.5,11.67 4.5,12C4.5,12.33 4.53,12.65 4.57,12.97L2.46,14.63C2.27,14.78 2.21,15.05 2.34,15.27L4.34,18.73C4.46,18.95 4.73,19.03 4.95,18.95L7.44,17.94C7.96,18.34 8.5,18.68 9.13,18.93L9.5,21.58C9.54,21.82 9.75,22 10,22H14C14.25,22 14.46,21.82 14.5,21.58L14.87,18.93C15.5,18.67 16.04,18.34 16.56,17.94L19.05,18.95C19.27,19.03 19.54,18.95 19.66,18.73L21.66,15.27C21.78,15.05 21.73,14.78 21.54,14.63L19.43,12.97Z"/></svg>
<svg style="left:1147.05px;top:86.75px;" width="11.5" height="11.5" viewBox="0 0 24 24" fill="#d8d8d8"><path d="M7.41,15.41L12,10.83L16.59,15.41L18,14L12,8L6,14L7.41,15.41Z"/></svg>
<span class="t b" style="left:638.8px;top:114.99px;font-size:7.6px;color:#e6e6e6;letter-spacing:-0.13px;">Name</span>
<span class="t b" style="left:1001.1px;top:114.99px;font-size:7.6px;color:#e6e6e6;letter-spacing:-0.15px;">Power</span>
<span class="t b" style="left:1045.5px;top:114.99px;font-size:7.6px;color:#e6e6e6;letter-spacing:-0.19px;">Actual</span>
<span class="t b" style="left:1098.9px;top:114.99px;font-size:7.6px;color:#e6e6e6;letter-spacing:-0.01px;">Target</span>
<div style="left:613.4px;top:131px;width:560px;height:1px;background:#39393d;"></div>
<div style="left:613.4px;top:157px;width:560px;height:25.3px;background:#35353a;"></div>
<div style="left:613.4px;top:156.6px;width:560px;height:1px;background:#39393d;"></div>
<div style="left:613.4px;top:182.3px;width:560px;height:1px;background:#39393d;"></div>
<div style="left:613.4px;top:208.3px;width:560px;height:1px;background:#39393d;"></div>
<svg style="left:623.5px;top:139.1px;" width="10.2" height="10.2" viewBox="0 0 24 24" fill="#f0803c"><path d="M17.66,11.2C17.43,10.9 17.15,10.64 16.89,10.38C16.22,9.78 15.46,9.35 14.82,8.72C13.33,7.26 13,4.85 13.95,3C13,3.23 12.17,3.75 11.46,4.32C8.87,6.4 7.85,10.07 9.07,13.22C9.11,13.32 9.15,13.42 9.15,13.55C9.15,13.77 9,13.97 8.8,14.05C8.57,14.15 8.33,14.09 8.14,13.93C8.08,13.88 8.04,13.83 8,13.76C6.87,12.33 6.69,10.28 7.45,8.64C5.78,10 4.87,12.3 5,14.47C5.06,14.97 5.12,15.47 5.29,15.97C5.43,16.57 5.7,17.17 6,17.7C7.08,19.43 8.95,20.67 10.96,20.92C13.1,21.19 15.39,20.8 17.03,19.32C18.86,17.66 19.5,15 18.56,12.72L18.43,12.46C18.22,12 17.66,11.2 17.66,11.2M14.5,17.5C14.22,17.74 13.76,18 13.4,18.1C12.28,18.5 11.16,17.94 10.5,17.28C11.69,17 12.4,16.12 12.61,15.23C12.78,14.43 12.46,13.77 12.33,13C12.21,12.26 12.23,11.63 12.5,10.94C12.69,11.32 12.89,11.7 13.13,12C13.9,13 15.11,13.44 15.37,14.8C15.41,14.94 15.43,15.08 15.43,15.23C15.46,16.05 15.1,16.95 14.5,17.5H14.5Z"/></svg>
<span class="t" style="left:638.8px;top:138.62px;font-size:10.6px;color:#ececec;letter-spacing:-0.32px;">Extruder</span>
<span class="t" style="left:1001.1px;top:139.12px;font-size:10.2px;color:#77777a;letter-spacing:-0.41px;">100</span>
<span class="t" style="left:1018.2px;top:141.58px;font-size:7px;color:#77777a;">%</span>
<span class="t" style="left:1045.5px;top:138.33px;font-size:11.2px;color:#ececec;letter-spacing:-0.33px;">36.2</span>
<span class="t" style="left:1067.1px;top:139.05px;font-size:8.5px;color:#ececec;">°</span>
<span class="t" style="left:1070.6px;top:139.62px;font-size:10.4px;color:#ececec;">c</span>
<span class="t" style="left:1084.6px;top:138.43px;font-size:11px;color:#e0e0e0;">/</span>
<svg style="left:623.5px;top:164.8px;" width="10.2" height="10.2" viewBox="0 0 24 24" fill="#2196f3"><path d="M17.66,11.2C17.43,10.9 17.15,10.64 16.89,10.38C16.22,9.78 15.46,9.35 14.82,8.72C13.33,7.26 13,4.85 13.95,3C13,3.23 12.17,3.75 11.46,4.32C8.87,6.4 7.85,10.07 9.07,13.22C9.11,13.32 9.15,13.42 9.15,13.55C9.15,13.77 9,13.97 8.8,14.05C8.57,14.15 8.33,14.09 8.14,13.93C8.08,13.88 8.04,13.83 8,13.76C6.87,12.33 6.69,10.28 7.45,8.64C5.78,10 4.87,12.3 5,14.47C5.06,14.97 5.12,15.47 5.29,15.97C5.43,16.57 5.7,17.17 6,17.7C7.08,19.43 8.95,20.67 10.96,20.92C13.1,21.19 15.39,20.8 17.03,19.32C18.86,17.66 19.5,15 18.56,12.72L18.43,12.46C18.22,12 17.66,11.2 17.66,11.2M14.5,17.5C14.22,17.74 13.76,18 13.4,18.1C12.28,18.5 11.16,17.94 10.5,17.28C11.69,17 12.4,16.12 12.61,15.23C12.78,14.43 12.46,13.77 12.33,13C12.21,12.26 12.23,11.63 12.5,10.94C12.69,11.32 12.89,11.7 13.13,12C13.9,13 15.11,13.44 15.37,14.8C15.41,14.94 15.43,15.08 15.43,15.23C15.46,16.05 15.1,16.95 14.5,17.5H14.5Z"/></svg>
<span class="t" style="left:638.8px;top:164.32px;font-size:10.6px;color:#ececec;letter-spacing:-0.35px;">Heater Bed</span>
<span class="t" style="left:1001.1px;top:164.82px;font-size:10.2px;color:#77777a;letter-spacing:-0.41px;">100</span>
<span class="t" style="left:1018.2px;top:167.28px;font-size:7px;color:#77777a;">%</span>
<span class="t" style="left:1045.5px;top:164.03px;font-size:11.2px;color:#ececec;letter-spacing:-0.33px;">26.5</span>
<span class="t" style="left:1067.1px;top:164.75px;font-size:8.5px;color:#ececec;">°</span>
<span class="t" style="left:1070.6px;top:165.32px;font-size:10.4px;color:#ececec;">c</span>
<span class="t" style="left:1084.6px;top:164.13px;font-size:11px;color:#e0e0e0;">/</span>
<svg style="left:623.5px;top:190.5px;" width="10.2" height="10.2" viewBox="0 0 24 24" fill="#ef4b3e"><path d="M17.66,11.2C17.43,10.9 17.15,10.64 16.89,10.38C16.22,9.78 15.46,9.35 14.82,8.72C13.33,7.26 13,4.85 13.95,3C13,3.23 12.17,3.75 11.46,4.32C8.87,6.4 7.85,10.07 9.07,13.22C9.11,13.32 9.15,13.42 9.15,13.55C9.15,13.77 9,13.97 8.8,14.05C8.57,14.15 8.33,14.09 8.14,13.93C8.08,13.88 8.04,13.83 8,13.76C6.87,12.33 6.69,10.28 7.45,8.64C5.78,10 4.87,12.3 5,14.47C5.06,14.97 5.12,15.47 5.29,15.97C5.43,16.57 5.7,17.17 6,17.7C7.08,19.43 8.95,20.67 10.96,20.92C13.1,21.19 15.39,20.8 17.03,19.32C18.86,17.66 19.5,15 18.56,12.72L18.43,12.46C18.22,12 17.66,11.2 17.66,11.2M14.5,17.5C14.22,17.74 13.76,18 13.4,18.1C12.28,18.5 11.16,17.94 10.5,17.28C11.69,17 12.4,16.12 12.61,15.23C12.78,14.43 12.46,13.77 12.33,13C12.21,12.26 12.23,11.63 12.5,10.94C12.69,11.32 12.89,11.7 13.13,12C13.9,13 15.11,13.44 15.37,14.8C15.41,14.94 15.43,15.08 15.43,15.23C15.46,16.05 15.1,16.95 14.5,17.5H14.5Z"/></svg>
<span class="t" style="left:638.8px;top:190.02px;font-size:10.6px;color:#ececec;letter-spacing:-0.41px;">Heater Bed 1</span>
<span class="t" style="left:1001.1px;top:190.52px;font-size:10.2px;color:#77777a;">off</span>
<span class="t" style="left:1045.5px;top:189.73px;font-size:11.2px;color:#ececec;letter-spacing:-0.33px;">26.3</span>
<span class="t" style="left:1067.1px;top:190.45px;font-size:8.5px;color:#ececec;">°</span>
<span class="t" style="left:1070.6px;top:191.02px;font-size:10.4px;color:#ececec;">c</span>
<span class="t" style="left:1084.6px;top:189.83px;font-size:11px;color:#e0e0e0;">/</span>
<div style="left:1098.9px;top:133.4px;width:62px;height:20.4px;border:1px solid #525256;border-radius:2.5px;"></div>
<span class="t" style="left:1107px;top:139.62px;font-size:10.4px;color:#f0f0f0;letter-spacing:0.02px;">200</span>
<span class="t" style="left:1145px;top:139.81px;font-size:10px;color:#ececec;letter-spacing:-0.82px;">°C</span>
<div style="left:1098.9px;top:186px;width:62px;height:19px;border:1px solid #525256;border-radius:2.5px;"></div>
<span class="t" style="left:1107px;top:191.12px;font-size:10.4px;color:#f0f0f0;">0</span>
<span class="t" style="left:1145px;top:191.31px;font-size:10px;color:#ececec;letter-spacing:-0.82px;">°C</span>
<div style="left:1098.9px;top:158px;width:60px;height:20px;border:2px solid #2f8de0;border-radius:3px;"></div>
<div style="left:1101.8px;top:146.6px;width:39.4px;height:39.4px;background:radial-gradient(circle closest-side,rgba(8,62,14,.94) 0,rgba(8,62,14,.92) 82%,rgba(8,62,14,.5) 93%,rgba(8,62,14,0) 100%);border-radius:19.7px;"></div>
<span class="t" style="left:1106.6px;top:164.72px;font-size:10.4px;color:#35d04a;letter-spacing:-0.37px;">60</span>
<span class="t" style="left:1145px;top:164.92px;font-size:10px;color:#3b8fe0;letter-spacing:-0.82px;">°C</span>
<svg style="left:1120.4px;top:161.8px;" width="6" height="11" viewBox="0 0 14 20" fill="#e0e0e0"><path d="M3 1.500h3.200M7.800 1.500H11M3 18.500h3.200M7.800 18.500H11M7 1.500v17" stroke="#f4f4f4" stroke-width="1.500" fill="none"/></svg>
<div style="left:1089px;top:126px;width:79px;height:54.8px;border:3.1px solid #f81010;border-radius:1.5px;"></div>
<span class="t" style="left:642.2px;top:219.1px;font-size:8.6px;color:#c4c4c4;letter-spacing:0.44px;">Temperature °C</span>
<span class="t" style="left:622px;top:233.71px;font-size:9.2px;color:#c8c8c8;letter-spacing:0.02px;">200</span>
<div style="left:642.2px;top:237.7px;width:516.2px;height:1px;background:#29292c;"></div>
<span class="t" style="left:622px;top:264.66px;font-size:9.2px;color:#c8c8c8;letter-spacing:0.02px;">150</span>
<div style="left:642.2px;top:268.65px;width:516.2px;height:1px;background:#29292c;"></div>
<span class="t" style="left:622px;top:295.61px;font-size:9.2px;color:#c8c8c8;letter-spacing:0.02px;">100</span>
<div style="left:642.2px;top:299.6px;width:516.2px;height:1px;background:#29292c;"></div>
<span class="t" style="left:627.2px;top:326.56px;font-size:9.2px;color:#c8c8c8;letter-spacing:-0.03px;">50</span>
<div style="left:642.2px;top:330.55px;width:516.2px;height:1px;background:#29292c;"></div>
<span class="t" style="left:632.28px;top:357.51px;font-size:9.2px;color:#c8c8c8;">0</span>
<div style="left:642.2px;top:361.5px;width:516.2px;height:1px;background:#29292c;"></div>
<div style="left:644px;top:238.2px;width:1px;height:123.8px;background:#28282b;"></div>
<span class="t" style="left:632.8px;top:371.71px;font-size:9.2px;color:#c8c8c8;letter-spacing:0.09px;">16:12</span>
<div style="left:695.85px;top:238.2px;width:1px;height:123.8px;background:#28282b;"></div>
<span class="t" style="left:684.65px;top:371.71px;font-size:9.2px;color:#c8c8c8;letter-spacing:0.09px;">16:14</span>
<div style="left:747.7px;top:238.2px;width:1px;height:123.8px;background:#28282b;"></div>
<span class="t" style="left:736.5px;top:371.71px;font-size:9.2px;color:#c8c8c8;letter-spacing:0.09px;">16:16</span>
<div style="left:799.55px;top:238.2px;width:1px;height:123.8px;background:#28282b;"></div>
<span class="t" style="left:788.35px;top:371.71px;font-size:9.2px;color:#c8c8c8;letter-spacing:0.09px;">16:18</span>
<div style="left:851.4px;top:238.2px;width:1px;height:123.8px;background:#28282b;"></div>
<span class="t" style="left:840.2px;top:371.71px;font-size:9.2px;color:#c8c8c8;letter-spacing:0.09px;">16:20</span>
<div style="left:903.25px;top:238.2px;width:1px;height:123.8px;background:#28282b;"></div>
<span class="t" style="left:892.05px;top:371.71px;font-size:9.2px;color:#c8c8c8;letter-spacing:0.09px;">16:22</span>
<div style="left:955.1px;top:238.2px;width:1px;height:123.8px;background:#28282b;"></div>
<span class="t" style="left:943.9px;top:371.71px;font-size:9.2px;color:#c8c8c8;letter-spacing:0.09px;">16:24</span>
<div style="left:1006.95px;top:238.2px;width:1px;height:123.8px;background:#28282b;"></div>
<span class="t" style="left:995.75px;top:371.71px;font-size:9.2px;color:#c8c8c8;letter-spacing:0.09px;">16:26</span>
<div style="left:1058.8px;top:238.2px;width:1px;height:123.8px;background:#28282b;"></div>
<span class="t" style="left:1047.6px;top:371.71px;font-size:9.2px;color:#c8c8c8;letter-spacing:0.09px;">16:28</span>
<div style="left:1110.65px;top:238.2px;width:1px;height:123.8px;background:#28282b;"></div>
<span class="t" style="left:1099.45px;top:371.71px;font-size:9.2px;color:#c8c8c8;letter-spacing:0.09px;">16:30</span>
<div style="left:642.2px;top:344.6px;width:515.2px;height:17.4px;background:rgba(120,70,66,.26);"></div>
<div style="left:642.2px;top:343.5px;width:515.2px;height:2px;background:#ee7157;box-shadow:0 0 1px rgba(255,170,150,.5);"></div>
<svg style="left:642.2px;top:237.5px" width="524" height="130" viewBox="0 0 524 130"><path d="M0 124.500H515" stroke="#bfa9a9" stroke-width="1" stroke-dasharray="2 1.600" fill="none"/><path d="M515.200 124.500V1h3" stroke="#b58e78" stroke-width="1" stroke-dasharray="2.400 1.700" fill="none"/><path d="M515.600 107.500l1.600-5" stroke="#d8d8d8" stroke-width="1" fill="none"/><rect x="513.200" y="88" width="3.600" height="36" fill="rgba(140,120,110,.32)"/></svg>
<!-- console card -->
<div style="left:613.4px;top:422px;width:560px;height:191px;background:#262629;border-radius:2px;"></div>
<div style="left:613.4px;top:396.5px;width:560px;height:26.5px;background:#343438;border-radius:2px 2px 0 0;"></div>
<svg style="left:623.35px;top:402.35px;" width="15.3" height="15.3" viewBox="0 0 24 24" fill="#ececec"><path d="M20,19V7H4V19H20M20,3A2,2 0 0,1 22,5V19A2,2 0 0,1 20,21H4A2,2 0 0,1 2,19V5C2,3.89 2.9,3 4,3H20M13,17V15H18V17H13M9.58,13L5.57,9H8.4L11.7,12.3C12.09,12.69 12.09,13.33 11.7,13.72L8.42,17H5.59L9.58,13Z"/></svg>
<span class="t" style="left:641.3px;top:403.15px;font-size:13.2px;color:#dedede;letter-spacing:-1.02px;">Console</span>
<div style="left:693.1px;top:405.3px;width:9.4px;height:9.4px;background:#1e88e5;border-radius:4.7px;"></div>
<span class="t b" style="left:695.53px;top:406.39px;font-size:7.6px;color:#e8f2ff;">?</span>
<svg style="left:1075.75px;top:402.55px;" width="15.3" height="15.3" viewBox="0 0 24 24" fill="#e0e0e0"><path d="M5.200 10V5.200H10M14 5.200h4.800V10M18.800 14v4.800H14M10 18.800H5.200V14" fill="none" stroke="#f0f0f0" stroke-width="2.500"/></svg>
<svg style="left:1101.05px;top:404.75px;" width="10.5" height="10.5" viewBox="0 0 24 24" fill="#f0f0f0"><path d="M19,4H15.5L14.5,3H9.5L8.5,4H5V6H19M6,19A2,2 0 0,0 8,21H16A2,2 0 0,0 18,19V7H6V19Z"/></svg>
<svg style="left:1124.3px;top:404.5px;" width="11" height="11" viewBox="0 0 24 24" fill="#f0f0f0"><path d="M12,15.5A3.5,3.5 0 0,1 8.5,12A3.5,3.5 0 0,1 12,8.5A3.5,3.5 0 0,1 15.5,12A3.5,3.5 0 0,1 12,15.5M19.43,12.97C19.47,12.65 19.5,12.33 19.5,12C19.5,11.67 19.47,11.34 19.43,11L21.54,9.37C21.73,9.22 21.78,8.95 21.66,8.73L19.66,5.27C19.54,5.05 19.27,4.96 19.05,5.05L16.56,6.05C16.04,5.66 15.5,5.32 14.87,5.07L14.5,2.42C14.46,2.18 14.25,2 14,2H10C9.75,2 9.54,2.18 9.5,2.42L9.13,5.07C8.5,5.32 7.96,5.66 7.44,6.05L4.95,5.05C4.73,4.96 4.46,5.05 4.34,5.27L2.34,8.73C2.21,8.95 2.27,9.22 2.46,9.37L4.57,11C4.53,11.34 4.5,11.67 4.5,12C4.5,12.33 4.53,12.65 4.57,12.97L2.46,14.63C2.27,14.78 2.21,15.05 2.34,15.27L4.34,18.73C4.46,18.95 4.73,19.03 4.95,18.95L7.44,17.94C7.96,18.34 8.5,18.68 9.13,18.93L9.5,21.58C9.54,21.82 9.75,22 10,22H14C14.25,22 14.46,21.82 14.5,21.58L14.87,18.93C15.5,18.67 16.04,18.34 16.56,17.94L19.05,18.95C19.27,19.03 19.54,18.95 19.66,18.73L21.66,15.27C21.78,15.05 21.73,14.78 21.54,14.63L19.43,12.97Z"/></svg>
<svg style="left:1147.05px;top:404.25px;" width="11.5" height="11.5" viewBox="0 0 24 24" fill="#d8d8d8"><path d="M7.41,15.41L12,10.83L16.59,15.41L18,14L12,8L6,14L7.41,15.41Z"/></svg>
<span class="t b m" style="left:616px;top:426.31px;font-size:9.2px;color:#8c8c8c;">16:31:11</span>
<span class="t b m" style="left:674px;top:426.31px;font-size:9.2px;color:#2f8fe4;letter-spacing:-0.07px;">$ G28</span>
<span class="t b m" style="left:616px;top:441.91px;font-size:9.2px;color:#8c8c8c;">16:31:47</span>
<span class="t b m" style="left:674px;top:441.91px;font-size:9.2px;color:#2f8fe4;letter-spacing:0.12px;">$ SET_HEATER_TEMPERATURE HEATER=extruder TARGET=200</span>
<span class="t b m" style="left:616px;top:457.51px;font-size:9.2px;color:#8c8c8c;">16:31:51</span>
<span class="t b m" style="left:674px;top:457.51px;font-size:9.2px;color:#2f8fe4;letter-spacing:0.12px;">$ SET_HEATER_TEMPERATURE HEATER=heater_bed TARGET=60</span>
<span class="t" style="left:1022px;top:594.95px;font-size:13.4px;color:#8e8e90;letter-spacing:-0.18px;">Activate Windows</span>
<!-- video pause overlay -->
<div style="left:580px;top:308px;width:64px;height:64px;background:rgba(8,8,10,.62);border-radius:32px;"></div>
<div style="left:598.5px;top:323.5px;width:10.4px;height:33.6px;background:#c6c6c6;border-radius:2px;"></div>
<div style="left:615.3px;top:323.5px;width:9.8px;height:33.6px;background:#c6c6c6;border-radius:2px;"></div>
<!-- scrollbar and sidebar -->
<div style="left:1183.5px;top:32px;width:10.2px;height:573px;background:#fbfbfb;"></div>
<div style="left:1186px;top:44.5px;width:5.5px;height:239px;background:#8b8b8b;border-radius:3px;"></div>
<svg style="left:1185.6px;top:36.6px;" width="6" height="4" viewBox="0 0 12 8" fill="#8a8a8a"><path d="M1 7l5-5.500L11 7z"/></svg>
<div style="left:1192.7px;top:32px;width:28.3px;height:573px;background:#f7f7f7;border-left:1px solid #e6e6e6;"></div>
<svg style="left:1203.9px;top:39.1px;" width="13" height="13" viewBox="0 0 24 24" fill="#e0e0e0"><circle cx="9.500" cy="9.500" r="6" fill="#cfe6f7" stroke="#5a6e86" stroke-width="2.200"/><path d="M14.300 14.300l6.200 6.200" stroke="#a24bd6" stroke-width="3" stroke-linecap="round"/></svg>
<svg style="left:1203.9px;top:65px;" width="13" height="13" viewBox="0 0 24 24" fill="#e0e0e0"><path d="M11.500 2.500H21a.8.8 0 0 1 .8.8v9.200L11.300 23 1.500 13.200z" fill="#3d6df2"/><circle cx="17.300" cy="6.900" r="1.900" fill="#e9efff"/></svg>
<svg style="left:1203.9px;top:91.1px;" width="13" height="13" viewBox="0 0 24 24" fill="#e0e0e0"><path d="M8.500 5.500V4a1.500 1.500 0 0 1 1.500-1.500h4A1.500 1.500 0 0 1 15.500 4v1.500" stroke="#b5471b" stroke-width="1.800" fill="none"/><rect x="2" y="5.500" width="20" height="15" rx="2" fill="#e8611f"/><rect x="2" y="11.200" width="20" height="2" fill="#b5471b"/><rect x="10" y="10" width="4" height="4.400" rx=".8" fill="#f7c8a6"/></svg>
<svg style="left:1203.9px;top:117px;" width="13" height="13" viewBox="0 0 24 24" fill="#e0e0e0"><path d="M6 9a3 3 0 1 1 4.500 2.600L12 19h1.500v2.500h-11V19H4l1.500-7.400A3 3 0 0 1 6 9z" fill="#555"/><path d="M14 3h1.800v1.800h1.800V3h1.800v1.800h1.800V3H23v5l-1.500 1.500.8 9.500H24v2.500H12.500V19h1.700l.8-9.500L13.500 8V3z" fill="#b05ae6"/></svg>
<svg style="left:1203.9px;top:141.9px;" width="13" height="13" viewBox="0 0 24 24" fill="#e0e0e0"><path d="M12 2l8.500 5v10L12 22l-8.500-5V7z" fill="#5b5fd6"/><path d="M12 2l8.500 5-8.500 5z" fill="#7c4ddb"/><path d="M12 7.500l4.200 2.500v4.800L12 17.300l-4.200-2.500V10z" fill="#f7f7f7"/><path d="M3.500 7L12 12v10l-8.500-5z" fill="#2c7be5" opacity=".85"/></svg>
<svg style="left:1203.9px;top:167.7px;" width="13" height="13" viewBox="0 0 24 24" fill="#e0e0e0"><rect x="8" y="3.500" width="14" height="17" rx="1.500" fill="#1f8fe6"/><rect x="15" y="3.500" width="7" height="8.500" fill="#4db2f5"/><rect x="1.500" y="6.500" width="12" height="12" rx="1.500" fill="#0f63bd"/><circle cx="7.500" cy="12.500" r="3" fill="none" stroke="#fff" stroke-width="1.700"/></svg>
<svg style="left:1203.9px;top:192.8px;" width="13" height="13" viewBox="0 0 24 24" fill="#e0e0e0"><path d="M2 5.500l20-1-9 16.500-2.500-8z" fill="#2aa1ee"/><path d="M2 5.500l8.500 7.500L22 4.500z" fill="#1a6fd0"/><path d="M10.500 13l2.500 8 1.500-6.500z" fill="#f0a21a"/></svg>
<svg style="left:1205.9px;top:223.7px;" width="9" height="9" viewBox="0 0 24 24" fill="#e0e0e0"><path d="M12 3v18M3 12h18" stroke="#555" stroke-width="2.200" fill="none"/></svg>
<svg style="left:1204.6px;top:579px;" width="12" height="12" viewBox="0 0 24 24" fill="#e0e0e0"><rect x="2.500" y="4.500" width="19" height="13" rx="2" fill="none" stroke="#555" stroke-width="1.700" stroke-dasharray="2.500 2"/><path d="M8.500 8.500l7 5M15.500 8.500l-7 5" stroke="#555" stroke-width="1.600"/><path d="M9 21h6" stroke="#555" stroke-width="1.600"/></svg>
<div style="left:1199px;top:598.5px;width:22px;height:1px;background:#d6d6d6;"></div>
<!-- browser chrome -->
<div style="left:0px;top:0px;width:1222px;height:2px;background:#000;"></div>
<div style="left:0px;top:2px;width:1222px;height:5px;background:#b9b9b9;"></div>
<div style="left:0px;top:7px;width:1222px;height:1px;background:#e6e6e6;"></div>
<div style="left:26px;top:2px;width:155.7px;height:6px;background:#f1f1f1;border-radius:3px 3px 0 0;"></div>
<div style="left:0px;top:2px;width:1222px;height:1px;background:rgba(0,0,0,.5);"></div>
<div style="left:0px;top:7.6px;width:1222px;height:24.8px;background:#f7f7f7;"></div>
<div style="left:0px;top:30.6px;width:1222px;height:1.6px;background:#fdfdfd;"></div>
<div style="left:0px;top:32px;width:1183px;height:1px;background:rgba(255,255,255,.4);"></div>
<div style="left:62px;top:9.6px;width:985px;height:20.4px;background:#ffffff;border-radius:10.2px;box-shadow:0 0 0 1px #f1f1f1;"></div>
<svg style="left:8.45px;top:13.45px;" width="12.5" height="12.5" viewBox="0 0 24 24" fill="#e0e0e0"><path d="M21 12H4.500M11 5.500L4.500 12l6.500 6.500" stroke="#444" stroke-width="1.700" fill="none"/></svg>
<svg style="left:36.75px;top:13.35px;" width="12.5" height="12.5" viewBox="0 0 24 24" fill="#e0e0e0"><path d="M19.500 12a7.500 7.500 0 1 1-2.300-5.400" stroke="#444" stroke-width="1.700" fill="none"/><path d="M18.800 2.500v5h-5" stroke="#444" stroke-width="1.700" fill="none"/></svg>
<svg style="left:71.75px;top:14.65px;" width="10.5" height="10.5" viewBox="0 0 24 24" fill="#5a5a5a"><path d="M13,14H11V10H13M13,18H11V16H13M1,21H23L12,2L1,21Z"/></svg>
<span class="t" style="left:88px;top:16px;font-size:9px;color:#6e6e6e;letter-spacing:-0.11px;">Not secure</span>
<div style="left:138.3px;top:13.5px;width:1px;height:12.6px;background:#c9c9c9;"></div>
<span class="t" style="left:148px;top:16px;font-size:9px;color:#1f1f1f;letter-spacing:-0.39px;">192.168.0.76</span>
<span class="t" style="left:196.7px;top:16px;font-size:9px;color:#767676;letter-spacing:1.25px;">/#/</span>
<span class="t" style="left:975px;top:15.17px;font-size:10.5px;color:#8a8a8a;-webkit-text-stroke:0;">A</span>
<span class="t" style="left:982.2px;top:14.27px;font-size:6px;color:#8a8a8a;-webkit-text-stroke:0;">A</span>
<svg style="left:999.95px;top:14.25px;" width="11.5" height="11.5" viewBox="0 0 24 24" fill="#e0e0e0"><rect x="3" y="4.500" width="18" height="15" rx="2.500" fill="none" stroke="#999" stroke-width="1.600"/><path d="M12 4.500v15" stroke="#999" stroke-width="1.600"/></svg>
<svg style="left:1025.15px;top:13.55px;" width="12.5" height="12.5" viewBox="0 0 24 24" fill="#e0e0e0"><path d="M12 3.200l2.700 5.700 6.200.8-4.600 4.300 1.200 6.200L12 17.200 6.500 20.200l1.200-6.200L3.100 9.700l6.200-.8z" fill="none" stroke="#8c8c8c" stroke-width="1.500" stroke-linejoin="round"/></svg>
<svg style="left:1059.05px;top:13.05px;" width="13.5" height="13.5" viewBox="0 0 24 24" fill="#e0e0e0"><path d="M9 3.400l2.200 4.700 5.100.7-3.700 3.600.9 5.100L9 15l-4.500 2.500.9-5.100L1.700 8.800l5.100-.7z" fill="none" stroke="#333" stroke-width="1.600" stroke-linejoin="round"/><path d="M17 9.800h5.200M16.200 13.400h6M16.200 17h6" stroke="#333" stroke-width="1.500"/></svg>
<svg style="left:1087.5px;top:13.3px;" width="13" height="13" viewBox="0 0 24 24" fill="#e0e0e0"><rect x="3" y="3" width="12" height="12" rx="3" fill="none" stroke="#333" stroke-width="1.600"/><rect x="8" y="8" width="13" height="13" rx="3" fill="#f7f7f7" stroke="#333" stroke-width="1.600"/><path d="M14.500 11v7M11 14.500h7" stroke="#333" stroke-width="1.600"/></svg>
<svg style="left:1115.5px;top:13.3px;" width="13" height="13" viewBox="0 0 24 24" fill="#e0e0e0"><path d="M12 20.500C5 15.500 2.500 12 2.500 8.500 2.500 5.700 4.700 3.500 7.300 3.500c1.900 0 3.700 1 4.700 2.700 1-1.700 2.800-2.700 4.700-2.700 2.600 0 4.800 2.200 4.800 5 0 1.500-.5 3-1.500 4.500" fill="none" stroke="#333" stroke-width="1.600"/><path d="M3 11h4l2-3 3 6 2-3h3" fill="none" stroke="#333" stroke-width="1.400"/><circle cx="17.500" cy="18" r="3.400" fill="#1f9d3a"/></svg>
<div style="left:1144.5px;top:12.6px;width:14.4px;height:14.4px;background:#c9c9c9;border-radius:7.2px;"></div>
<svg style="left:1146.2px;top:14.9px;" width="11" height="11" viewBox="0 0 24 24" fill="#8e8e8e"><circle cx="12" cy="8.500" r="4.300"/><path d="M3.500 22c0-5 3.800-7.500 8.500-7.500s8.500 2.500 8.500 7.500z"/></svg>
<div style="left:1155.6px;top:12.6px;width:4px;height:4px;background:#e3242b;border-radius:2px;"></div>
<svg style="left:1175px;top:13.8px;" width="12" height="12" viewBox="0 0 24 24" fill="#333"><circle cx="5" cy="12" r="1.600"/><circle cx="12" cy="12" r="1.600"/><circle cx="19" cy="12" r="1.600"/></svg>
<svg style="left:1200.05px;top:9.45px;" width="21.5" height="21.5" viewBox="0 0 24 24" fill="#e0e0e0"><path d="M12 1.800c5.700 0 10.200 3.900 10.200 9 0 5-4.500 9-10.200 9-1.300 0-2.500-.2-3.700-.6L3.500 22l1-4.600C2.900 15.700 1.800 13.400 1.800 10.800c0-5.100 4.500-9 10.200-9z" fill="#f2f8ff" stroke="#4d8fd6" stroke-width="1.200"/><path d="M9 5.200l2.400.8v8.400l3.300-1.800-1.600-.8-1-2.600 5.300 1.800v2.700L11.400 17.500 9 16.100z" fill="#1b74e4"/></svg>
</div></body></html>
